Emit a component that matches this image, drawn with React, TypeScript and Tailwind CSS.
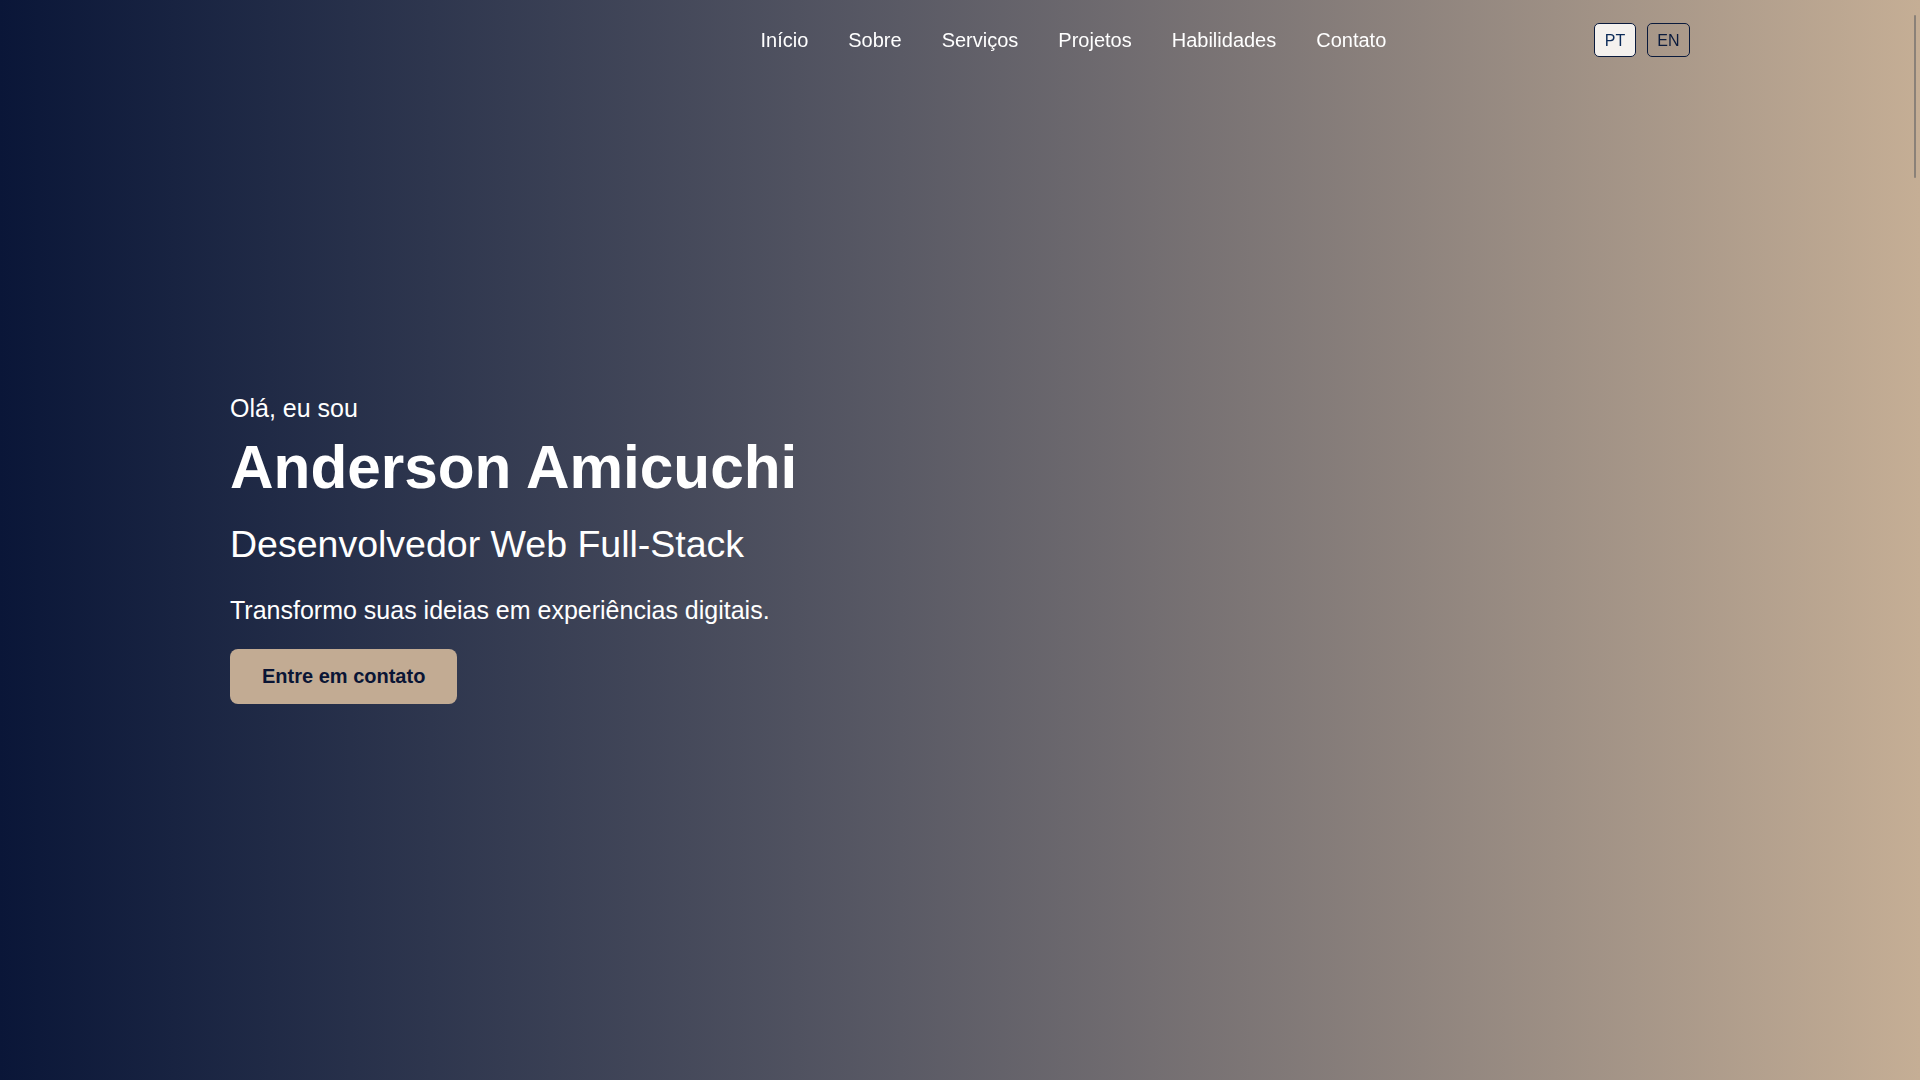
import React from "react";

export default function App() {
  const links = ["Início", "Sobre", "Serviços", "Projetos", "Habilidades", "Contato"];

  return (
    <div
      className="relative min-h-screen w-full overflow-hidden bg-gradient-to-r from-[#0a1638] to-[#c5ae95] text-white"
      style={{ fontFamily: '"Liberation Sans", Arial, sans-serif' }}
    >
      <header className="fixed inset-x-0 top-0 z-10 flex h-20 items-center justify-end px-[230px]">
        <nav className="flex items-center gap-10">
          {links.map((link) => (
            <a key={link} href="#" className="text-[20px] leading-[normal] text-white">
              {link}
            </a>
          ))}
        </nav>
        <div className="ml-[208px] flex items-center gap-[11px]">
          <button className="h-[34px] rounded-[5px] border border-[#0a1a3c] bg-[#f4f1ee] px-[9.5px] pt-[1px] text-[16px] text-[#0b2a58]">
            PT
          </button>
          <button className="h-[34px] rounded-[5px] border border-[#0a1a3c] bg-transparent px-[9.5px] pt-[1px] text-[16px] text-[#0a1a3c]">
            EN
          </button>
        </div>
      </header>

      <section className="flex min-h-screen flex-col justify-center px-[230px]">
        <div className="flex flex-col items-start pt-[17px]">
          <p className="text-[25px] leading-[normal]">Olá, eu sou</p>
          <h1 className="mt-[9px] text-[60.3px] font-bold leading-[normal]">Anderson Amicuchi</h1>
          <h2 className="mt-[21px] text-[37.5px] leading-[normal]">Desenvolvedor Web Full-Stack</h2>
          <p className="mt-[30px] text-[25px] leading-[normal]">
            Transformo suas ideias em experiências digitais.
          </p>
          <a
            href="#"
            className="mt-[24px] rounded-lg bg-[#c2ab93] px-8 py-4 text-[20px] font-bold leading-[normal] text-[#0a1535]"
          >
            Entre em contato
          </a>
        </div>
      </section>

      {/* scrollbar thumb */}
      <div className="fixed right-[4px] top-[15px] h-[163px] w-[2px] rounded-full bg-[#8a8178]" />
    </div>
  );
}
